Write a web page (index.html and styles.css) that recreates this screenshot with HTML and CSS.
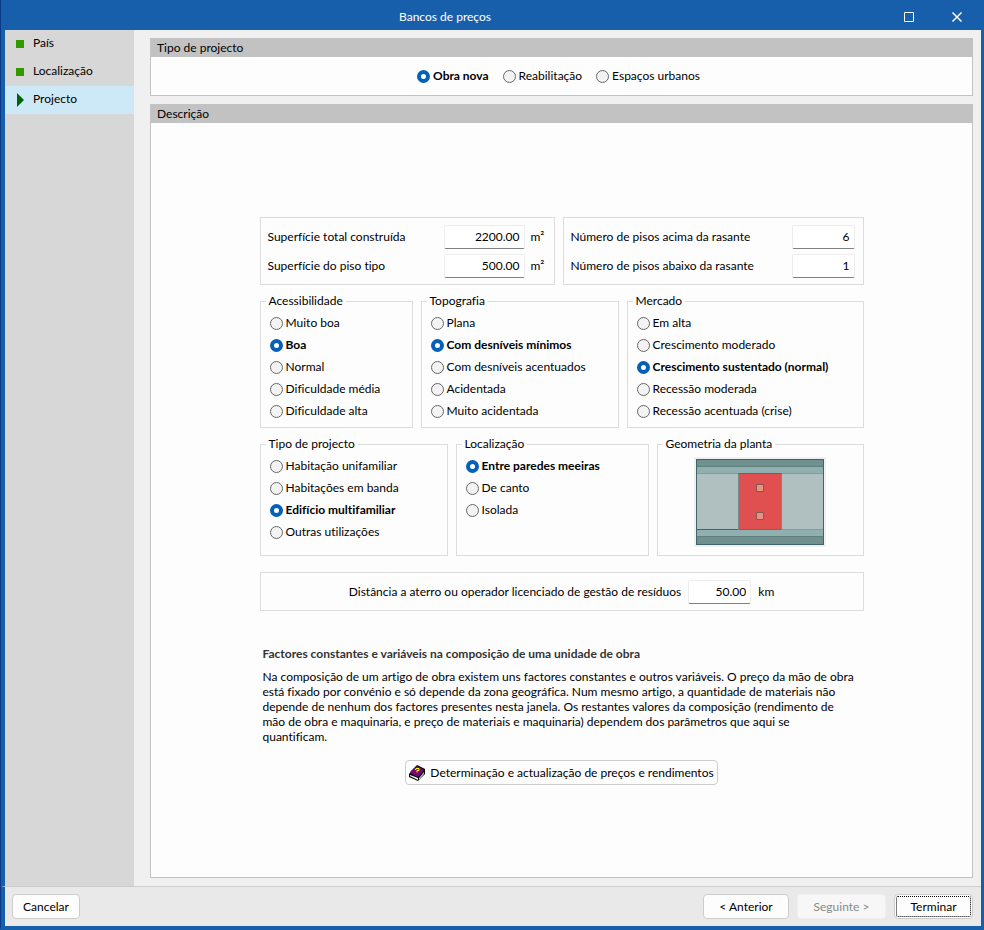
FILE: index.html
```html
<!DOCTYPE html>
<html lang="pt">
<head>
<meta charset="utf-8">
<title>Bancos de preços</title>
<link rel="stylesheet" href="styles.css">
</head>
<body>
<div class="window">
<header class="titlebar">
<h1>Bancos de preços</h1>
<button class="winbtn" aria-label="Maximizar"><svg width="12" height="12"><path d="M1.500 1.500h9v9h-9z"/></svg></button>
<button class="winbtn" aria-label="Fechar"><svg width="12" height="12"><path d="M1.500 1.500l9 9M10.500 1.500l-9 9" stroke-width="1.500"/></svg></button>
</header>
<div class="content">
<nav class="steps">
<a href="#pais"><span class="done"></span>País</a>
<a href="#localizacao"><span class="done"></span>Localização</a>
<a href="#projecto" class="current"><span class="arrow"></span>Projecto</a>
</nav>
<main>
<section class="panel">
<h2>Tipo de projecto</h2>
<div class="types">
<label><input type="radio" name="obra" checked><span>Obra nova</span></label>
<label><input type="radio" name="obra"><span>Reabilitação</span></label>
<label><input type="radio" name="obra"><span>Espaços urbanos</span></label>
</div>
</section>
<section class="panel fill">
<h2>Descrição</h2>
<div class="description">
<form class="form">
<div class="row numbers">
<div class="box">
<div class="field"><label for="total">Superfície total construída</label><input type="text" id="total" value="2200.00"><span class="unit">m²</span></div>
<div class="field"><label for="tipo">Superfície do piso tipo</label><input type="text" id="tipo" value="500.00"><span class="unit">m²</span></div>
</div>
<div class="box">
<div class="field"><label for="acima">Número de pisos acima da rasante</label><input type="text" class="short" id="acima" value="6"></div>
<div class="field"><label for="abaixo">Número de pisos abaixo da rasante</label><input type="text" class="short" id="abaixo" value="1"></div>
</div>
</div>
<div class="row market">
<fieldset>
<legend>Acessibilidade</legend>
<label><input type="radio" name="acesso"><span>Muito boa</span></label>
<label><input type="radio" name="acesso" checked><span>Boa</span></label>
<label><input type="radio" name="acesso"><span>Normal</span></label>
<label><input type="radio" name="acesso"><span>Dificuldade média</span></label>
<label><input type="radio" name="acesso"><span>Dificuldade alta</span></label>
</fieldset>
<fieldset>
<legend>Topografia</legend>
<label><input type="radio" name="topo"><span>Plana</span></label>
<label><input type="radio" name="topo" checked><span>Com desníveis mínimos</span></label>
<label><input type="radio" name="topo"><span>Com desníveis acentuados</span></label>
<label><input type="radio" name="topo"><span>Acidentada</span></label>
<label><input type="radio" name="topo"><span>Muito acidentada</span></label>
</fieldset>
<fieldset>
<legend>Mercado</legend>
<label><input type="radio" name="mercado"><span>Em alta</span></label>
<label><input type="radio" name="mercado"><span>Crescimento moderado</span></label>
<label><input type="radio" name="mercado" checked><span>Crescimento sustentado (normal)</span></label>
<label><input type="radio" name="mercado"><span>Recessão moderada</span></label>
<label><input type="radio" name="mercado"><span>Recessão acentuada (crise)</span></label>
</fieldset>
</div>
<div class="row building">
<fieldset>
<legend>Tipo de projecto</legend>
<label><input type="radio" name="projecto"><span>Habitação unifamiliar</span></label>
<label><input type="radio" name="projecto"><span>Habitações em banda</span></label>
<label><input type="radio" name="projecto" checked><span>Edifício multifamiliar</span></label>
<label><input type="radio" name="projecto"><span>Outras utilizações</span></label>
</fieldset>
<fieldset>
<legend>Localização</legend>
<label><input type="radio" name="local" checked><span>Entre paredes meeiras</span></label>
<label><input type="radio" name="local"><span>De canto</span></label>
<label><input type="radio" name="local"><span>Isolada</span></label>
</fieldset>
<fieldset>
<legend>Geometria da planta</legend>
<svg class="plan" width="132" height="90" viewBox="0 0 132 90">
<rect width="132" height="90" fill="#f0f0f0"/>
<rect x="2.500" y="2.500" width="127" height="85" fill="#b0c0c0"/>
<path d="M2 2h128v8H2zM2 80h128v8H2z" fill="#709090"/>
<path d="M2 10h128v6H2zM2 73h128v6H2z" fill="#90b0b0"/>
<path d="M3 9.500h126M3 79.500h126" stroke="#608080"/>
<path d="M3 16.500h126M88 72.500h41" stroke="#809c9c"/>
<path d="M3 72.500h42" stroke="#406468"/>
<rect x="44.500" y="16.500" width="43" height="56" fill="#e05050" stroke="#708c8c"/>
<path d="M44 16.500h44" stroke="#506c70"/>
<path d="M45 72.500h42" stroke="#905860"/>
<path d="M62.500 27.500h7v7h-7zM62.500 55.500h7v7h-7z" fill="#f09080" stroke="#805858"/>
<rect x="2.500" y="2.500" width="127" height="85" fill="none" stroke="#406468"/>
</svg>
</fieldset>
</div>
<div class="box distance">
<label for="dist">Distância a aterro ou operador licenciado de gestão de resíduos</label>
<input type="text" class="short" id="dist" value="50.00"><span>km</span>
</div>
<h3>Factores constantes e variáveis na composição de uma unidade de obra</h3>
<p>Na composição de um artigo de obra existem uns factores constantes e outros variáveis. O preço da mão de obra<br>
está fixado por convénio e só depende da zona geográfica. Num mesmo artigo, a quantidade de materiais não<br>
depende de nenhum dos factores presentes nesta janela. Os restantes valores da composição (rendimento de<br>
mão de obra e maquinaria, e preço de materiais e maquinaria) dependem dos parâmetros que aqui se<br>
quantificam.</p>
<button type="button" class="btn help">
<svg width="16" height="16" viewBox="0 0 16 16">
<path d="M0 9L8 0l8 4v5l-7 7-9-4z" fill="#000"/>
<path d="M1 8l7-7 7 4-6 7z" fill="#800080"/>
<path d="M1 7l6-6" stroke="#c060c0"/>
<path d="M1 10l8 3v2l-8-4z" fill="#fff"/>
<path d="M10 13l5-6v2l-5 6z" fill="#c0c0c0"/>
<path d="M6 4.500h1v-1h3v2H8v2" stroke="#ff0" fill="none"/>
</svg>
Determinação e actualização de preços e rendimentos</button>
</form>
</div>
</section>
</main>
</div>
<footer>
<button class="btn cancel">Cancelar</button>
<button class="btn prev">&lt; Anterior</button>
<button class="btn next" disabled>Seguinte &gt;</button>
<button class="btn finish">Terminar</button>
</footer>
</div>
</body>
</html>
```
FILE: styles.css
```css
*{box-sizing:border-box;}
body{
margin:0;
color:#000;
font:12px/16px Lato,"Open Sans",sans-serif;
font-variant-ligatures:none;}
button,input{
font:inherit;
color:inherit;}
h1,h2,h3,p{
margin:0;
font-size:12px;
font-weight:normal;}

.window{
display:flex;
flex-direction:column;
min-height:100vh;
background:#f0f0f0;
border:solid #185fab;
border-width:0 3px 4px 1px;
border-left-color:#0a3a86;}
.titlebar{
display:flex;
height:30px;
padding-left:4px;
color:#fff;
background:#185fab;}
.titlebar h1{
flex:1;
padding-top:9px;
text-align:center;}
.winbtn{
width:48px;
padding:4px 0 0;
border:0;
background:none;}
.winbtn svg{
display:block;
margin:0 auto;
fill:none;
stroke:#fff;}

.content{
display:flex;
flex:1;
border-left:4px solid #185fab;}
.steps{
width:129px;
background:#d7d7d7;}
.steps a{
display:flex;
align-items:center;
height:28px;
padding:0 0 2px 11px;
color:#000;
text-decoration:none;}
.steps .current{background:#cde9f7;}
.done{
width:8px;
height:8px;
margin:2px 9px 0 0;
background:#339900;}
.arrow{
margin:2px 9px 0 1px;
border:solid transparent;
border-width:7px 0 7px 7px;
border-left-color:#006400;}
main{
display:flex;
flex:1;
flex-direction:column;
gap:8px;
padding:8px 8px 8px 16px;}

.panel{
display:flex;
flex-direction:column;
background:#fdfdfd;
border:1px solid #c3c3c3;}
.panel h2{
height:18px;
padding:1px 6px;
background:#c2c2c2;}
.fill{flex:1;}
.types{
display:flex;
justify-content:center;
gap:14px;
padding:8px 6px 8px 0;}
.description{
display:flex;
flex:1;
align-items:center;
justify-content:center;
padding:10px 8px 8px;}
.form{
display:flex;
flex-direction:column;
width:604px;}

.row{
display:grid;
gap:8px;
margin-bottom:8px;}
.numbers{grid-template-columns:295fr 301fr;}
.market{grid-template-columns:153fr 198fr 237fr;}
.building{
grid-template-columns:188fr 193fr 207fr;
margin-bottom:16px;}
.box{
padding:7px 7px 6px;
border:1px solid #dcdcdc;}
.field{
display:flex;
align-items:center;
height:24px;}
.field + .field{margin-top:5px;}
.field label{flex:1;}
.unit{
width:16px;
margin-left:6px;}
input[type=text]{
width:81px;
height:24px;
padding:0 4px 1px;
text-align:right;
background:#fff;
border:1px solid #ececec;
border-bottom-color:#808080;
border-radius:2px;}
input[type=text].short{width:63px;}
.numbers .short{margin-right:1px;}

fieldset{
min-width:0;
margin:0;
padding:3px 5px 5px;
border:1px solid #dcdcdc;}
.building fieldset{padding-bottom:8px;}
legend{
height:16px;
padding:0 3px;}
fieldset label,.types label{
display:flex;
align-items:center;
gap:3px;
height:22px;
white-space:nowrap;}
fieldset label{padding-left:4px;}
input[type=radio]{
appearance:none;
width:13px;
height:13px;
margin:0;
background:#f3f3f3;
border:1px solid #666;
border-radius:50%;}
input[type=radio]:checked{
background:#fff;
border:4px solid #0560b8;}
input:checked + span{font-weight:bold;}
.plan{
display:block;
margin:2px auto 0;}

.distance{
display:flex;
align-items:center;
justify-content:center;
gap:7px;}
.form h3{
margin:35px 3px 7px;
font-weight:bold;
color:#333;}
.form p{
padding:0 3px;
line-height:15px;
white-space:nowrap;}

.btn{
height:25px;
padding:0 8px;
background:#fdfdfd;
border:1px solid #cdcdcd;
border-radius:4px;
white-space:nowrap;}
.help{
display:flex;
align-items:center;
align-self:center;
gap:5px;
margin-top:16px;
padding:0 3px;}
footer{
display:flex;
gap:8px;
height:40px;
padding:7px 8px 7px 7px;
background:#e9e9e9;
border-top:1px solid #cdcdcd;
border-left:4px solid #185fab;}
.cancel{
width:68px;
margin-right:auto;}
.prev{width:86px;}
.next{
width:89px;
color:#8a8a8a;
background:#f7f7f7;
border-color:#f0f0f0;}
.finish{
width:79px;
outline:1px dotted #000;
outline-offset:-3px;}
```
